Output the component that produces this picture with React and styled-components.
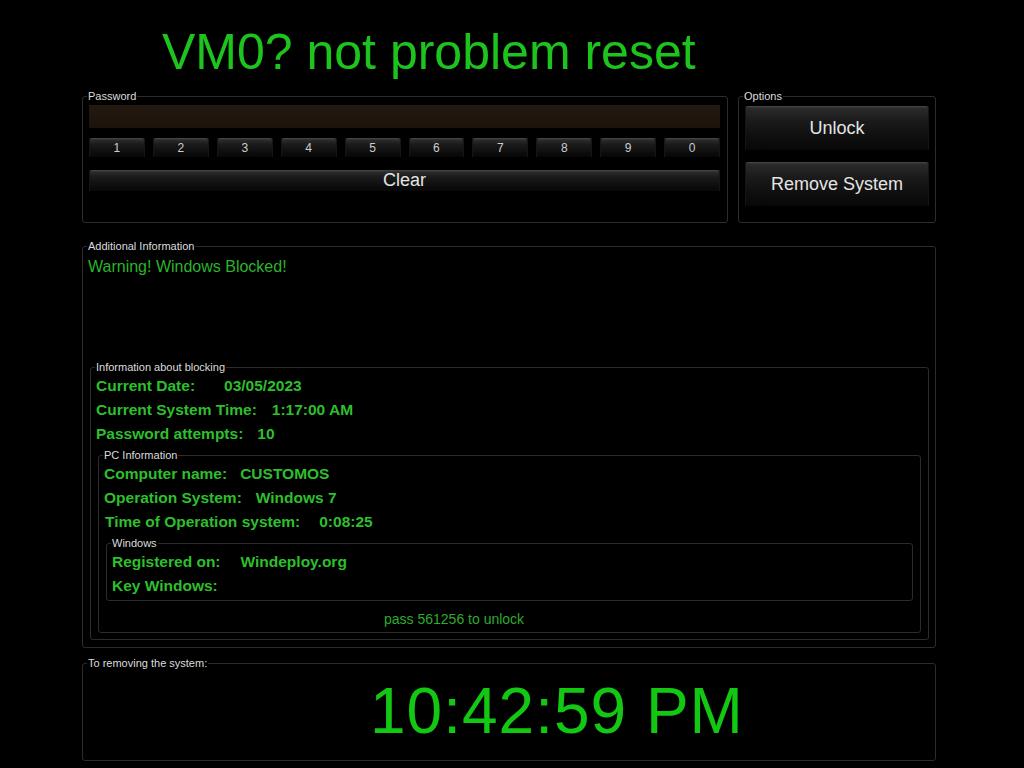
import styled, { createGlobalStyle } from 'styled-components';

const GlobalStyle = createGlobalStyle`
  html, body {
    margin:0;
    padding:0;
    background:#000;
  }
  body {
    font-family: "Liberation Sans", Arial, sans-serif;
  }
  * {
    box-sizing:border-box;
  }
`;

const Page = styled.div`
    width:1024px;
    min-height:768px;
    background:#000;
    padding-left:82px;
`;

const Column = styled.div`
    width:854px;
    display:flex;
    flex-direction:column;
`;

const Title = styled.h1`
    margin:0;
    height:90px;
    padding:27px 0 0 80px;
    font-size:50px;
    line-height:50px;
    font-weight:normal;
    color:#1ec41e;
    white-space:nowrap;
`;

const TopRow = styled.div`
    display:flex;
    gap:10px;
`;

const Group = styled.fieldset`
    margin:${p => p.$margin || '0'};
    padding:0;
    min-width:0;
    width:${p => p.$width || 'auto'};
    border:1px solid #2c2c2c;
    border-radius:3px;
`;

const Legend = styled.legend`
    margin-left:4px;
    padding:0 1px;
    font-size:11px;
    line-height:12px;
    color:#dcdcdc;
`;

const Body = styled.div`
    padding:${p => p.$pad};
`;

const PassInput = styled.div`
    height:23px;
    background:linear-gradient(to bottom, #241910, #1c130b);
`;

const Keys = styled.div`
    margin-top:10px;
    display:grid;
    grid-template-columns:repeat(10, 1fr);
    gap:8px;
`;

const DarkButton = styled.button`
    display:flex;
    justify-content:center;
    align-items:center;
    width:100%;
    height:${p => p.$h}px;
    margin-top:${p => p.$top || 0}px;
    padding:0;
    border:none;
    border-radius:2px 2px 0 0;
    font-family:"Liberation Sans", Arial, sans-serif;
    font-size:${p => p.$size}px;
    color:${p => p.$size > 14 ? '#e4e4e4' : '#cdcdcd'};
    background:linear-gradient(to bottom, #4a4a4a 0, #2b2b2b 2px, #1a1a1a 35%, #0c0c0c 80%, #070707 100%);
    box-shadow:inset 1px 0 0 #151515, inset -1px 0 0 #151515;
`;

const Warning = styled.div`
    font-size:16px;
    line-height:18px;
    color:#2bb32b;
`;

const Line = styled.div`
    font-size:15.5px;
    line-height:24px;
    font-weight:bold;
    color:#2dbf2d;
    white-space:nowrap;
    padding-left:${p => p.$indent || 0}px;
`;

const Value = styled.span`
    margin-left:${p => p.$gap}px;
`;

const PassHint = styled.div`
    margin-top:9px;
    padding-left:280px;
    font-size:14px;
    line-height:18px;
    color:#2eab2e;
`;

const Clock = styled.div`
    font-size:64px;
    line-height:64px;
    letter-spacing:1px;
    color:#12c812;
    white-space:nowrap;
`;

const digits = ['1', '2', '3', '4', '5', '6', '7', '8', '9', '0'];

const App = () => {
  return (
    <Page>
      <GlobalStyle />
      <Column>
        <Title>VM0? not problem reset</Title>

        <TopRow>
          <Group $width="646px">
            <Legend>Password</Legend>
            <Body $pad="3px 7px 28px 6px">
              <PassInput />
              <Keys>
                {digits.map(d => (
                  <DarkButton key={d} $h={19} $size={12}>{d}</DarkButton>
                ))}
              </Keys>
              <DarkButton $h={21} $size={18} $top={13}>Clear</DarkButton>
            </Body>
          </Group>

          <Group $width="198px">
            <Legend>Options</Legend>
            <Body $pad="4px 6px 16px 6px">
              <DarkButton $h={44} $size={18}>Unlock</DarkButton>
              <DarkButton $h={44} $size={18} $top={12}>Remove System</DarkButton>
            </Body>
          </Group>
        </TopRow>

        <Group $margin="17px 0 0 0">
          <Legend>Additional Information</Legend>
          <Body $pad="6px 6px 7px 5px">
            <Warning>Warning! Windows Blocked!</Warning>

            <Group $margin="85px 0 0 2px">
              <Legend>Information about blocking</Legend>
              <Body $pad="1px 7px 6px 5px">
                <Line>Current Date:<Value $gap={29}>03/05/2023</Value></Line>
                <Line>Current System Time:<Value $gap={15}>1:17:00 AM</Value></Line>
                <Line>Password attempts:<Value $gap={14}>10</Value></Line>

                <Group $margin="3px 0 0 2px">
                  <Legend>PC Information</Legend>
                  <Body $pad="1px 7px 4px 5px">
                    <Line>Computer name:<Value $gap={13}>CUSTOMOS</Value></Line>
                    <Line>Operation System:<Value $gap={14}>Windows 7</Value></Line>
                    <Line $indent={1}>Time of Operation system:<Value $gap={19}>0:08:25</Value></Line>

                    <Group $margin="3px 0 0 2px">
                      <Legend>Windows</Legend>
                      <Body $pad="1px 7px 2px 5px">
                        <Line>Registered on:<Value $gap={20}>Windeploy.org</Value></Line>
                        <Line>Key Windows:</Line>
                      </Body>
                    </Group>

                    <PassHint>pass 561256 to unlock</PassHint>
                  </Body>
                </Group>
              </Body>
            </Group>
          </Body>
        </Group>

        <Group $margin="9px 0 0 0">
          <Legend>To removing the system:</Legend>
          <Body $pad="10px 0 17px 287px">
            <Clock>10:42:59 PM</Clock>
          </Body>
        </Group>
      </Column>
    </Page>
  );
};

export default App;
